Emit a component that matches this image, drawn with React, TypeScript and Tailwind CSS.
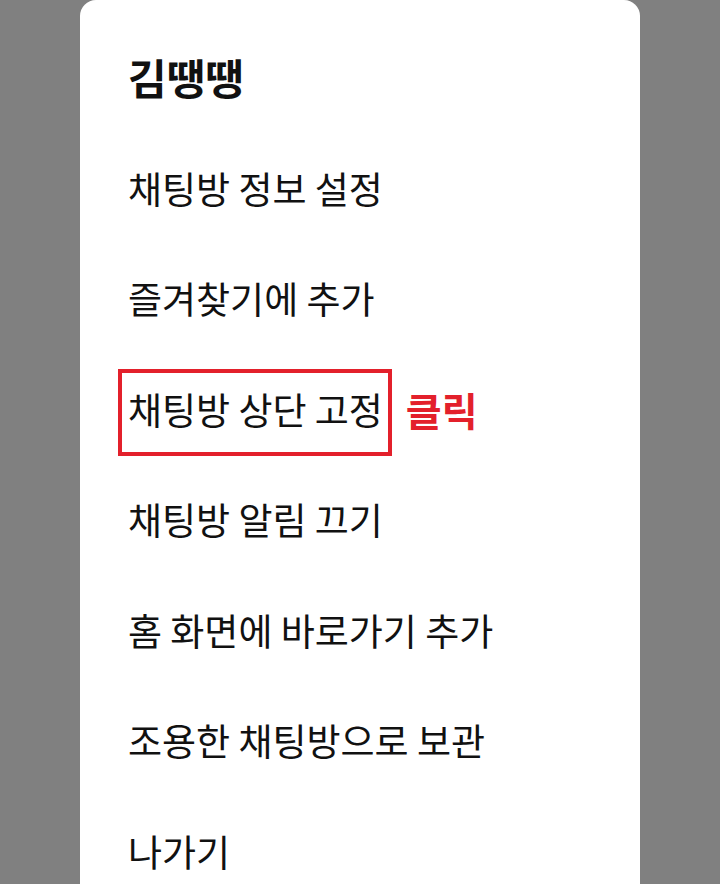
const items = [
  "채팅방 정보 설정",
  "즐겨찾기에 추가",
  "채팅방 상단 고정",
  "채팅방 알림 끄기",
  "홈 화면에 바로가기 추가",
  "조용한 채팅방으로 보관",
  "나가기",
];

const font = { fontFamily: '"Noto Sans CJK KR", "Noto Sans", sans-serif' };

export default function App() {
  return (
    <div className="h-[884px] w-full overflow-hidden bg-[#808080]" style={font}>
      <div className="ml-[80px] h-full w-[560px] rounded-t-[16px] bg-white pl-[48px] pt-[20px]">
        <div className="flex h-[113px] items-center text-[42px] font-bold leading-none text-[#111111]">
          김땡땡
        </div>
        {items.map((label, i) => (
          <div key={i} className="flex h-[110.5px] items-center">
            {i === 2 ? (
              <div className="flex items-center">
                <div className="-ml-[10px] mt-[6px] flex h-[87px] items-center border-[4px] border-[#e3202b] pb-[6px] pl-[6px] pr-[5px] text-[37px] leading-none text-[#111111]">
                  {label}
                </div>
                <span className="ml-[14px] text-[39px] font-bold leading-none text-[#e3202b]">클릭</span>
              </div>
            ) : (
              <div className="text-[37px] leading-none text-[#111111]">{label}</div>
            )}
          </div>
        ))}
      </div>
    </div>
  );
}
